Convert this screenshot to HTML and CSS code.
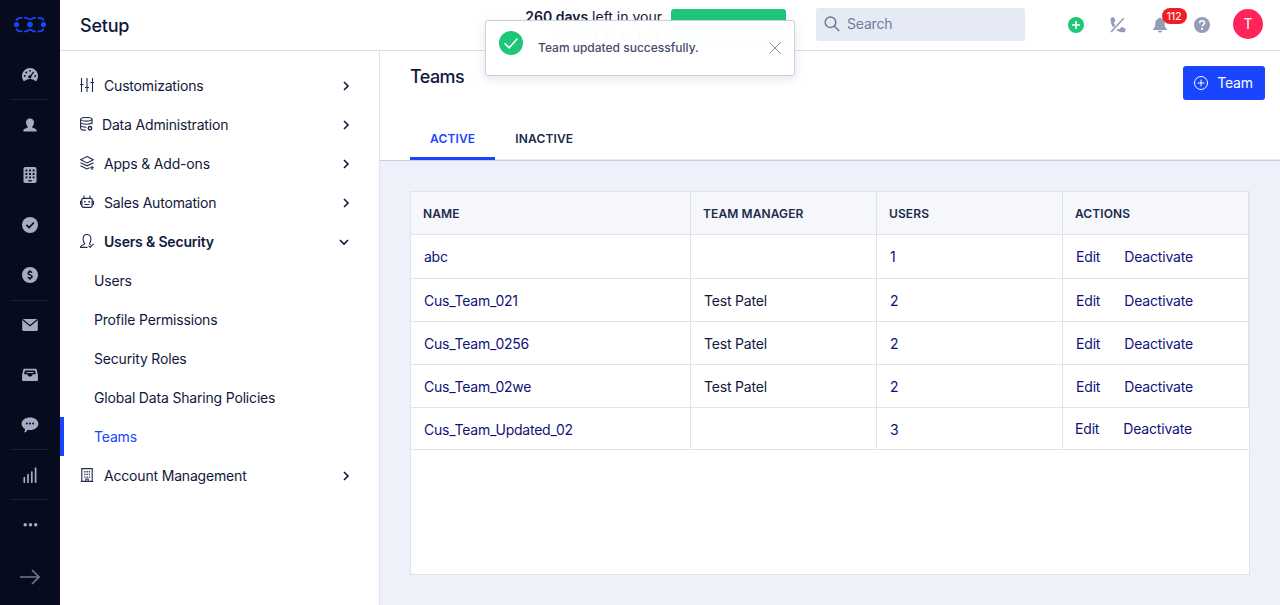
FILE: index.html
```html
<!DOCTYPE html>
<html lang="en">
<head>
<meta charset="utf-8">
<title>Setup - Teams</title>
<link rel="stylesheet" href="styles.css">
</head>
<body>
<div class="app">
  <nav class="rail">
    <div class="rail-logo">
      <svg width="34" height="18" viewBox="0 0 34 18" fill="none" stroke="#1a45ff" stroke-width="1.7">
        <path d="M3.200 4.600C4.200 2.600 5.400 1.900 7.600 1.900h1.800M11.200 1.900h1.600c2 0 2.300 1.500 4.200 1.500s2.200-1.500 4.200-1.500h1.600M24.600 1.900h1.800c2.200 0 3.400.700 4.400 2.700M3.200 12.600c1 2 2.200 2.700 4.400 2.700h1.800M11.200 15.300h1.600c2 0 2.300-1.500 4.200-1.500s2.200 1.500 4.200 1.500h1.600M24.600 15.300h1.800c2.200 0 3.400-.700 4.400-2.700"/>
        <g fill="#1a45ff" stroke="none"><circle cx="3.500" cy="8.600" r="2.600"/><circle cx="17" cy="8.600" r="2.800"/><circle cx="30.500" cy="8.600" r="2.600"/></g>
      </svg>
    </div>
    <a class="rail-item rail-line">
      <svg width="16" height="16" viewBox="0 0 16 16"><path fill="#a4adc6" d="M8 1a8 8 0 0 0-8 8c0 2 .7 4 2 5.200l2.600-1.500c2-1 4.800-1 6.800 0L14 14.200c1.300-1.200 2-3.200 2-5.200a8 8 0 0 0-8-8z"/><g fill="#060c1d"><circle cx="2.800" cy="9" r=".9"/><circle cx="4.300" cy="5.500" r=".9"/><circle cx="8" cy="3.800" r=".9"/><circle cx="13.200" cy="9" r=".9"/><circle cx="7.800" cy="9.800" r="1.600"/></g><path d="M8 9.800l3.700-5" stroke="#060c1d" stroke-width="1.200"/></svg>
    </a>
    <a class="rail-item">
      <svg width="16" height="16" viewBox="0 0 16 16" fill="#a4adc6"><path d="M8 1.400c2.600 0 4 1.700 4 4 0 1.800-.8 3.400-2 4.300.2 1.600 4.700 1.400 4.700 4.200 0 .5-.3.700-.7.700H2c-.4 0-.7-.2-.7-.7 0-2.800 4.500-2.600 4.700-4.200-1.200-.9-2-2.500-2-4.300 0-2.300 1.400-4 4-4z"/></svg>
    </a>
    <a class="rail-item">
      <svg width="16" height="16" viewBox="0 0 16 16"><rect x="1.500" y="0" width="13" height="16" rx="1.800" fill="#a4adc6"/><path d="M3.500 3.500h9M3.500 7h9M3.500 10.400h9" stroke="#060c1d" stroke-width="1.800" stroke-dasharray="1.800 1.800"/><path d="M6.200 13.800h3.600" stroke="#060c1d" stroke-width="1.300"/></svg>
    </a>
    <a class="rail-item">
      <svg width="16" height="16" viewBox="0 0 16 16"><circle cx="8" cy="8" r="8" fill="#a4adc6"/><path d="M4.300 7.800l2.800 2.700 4.800-5" stroke="#060c1d" stroke-width="1.700" fill="none"/></svg>
    </a>
    <a class="rail-item rail-line rail-tall">
      <svg width="16" height="16" viewBox="0 0 16 16"><circle cx="8" cy="8" r="8" fill="#a4adc6"/><path d="M10 5.700c-.4-.7-1-.9-2-.9-1.200 0-1.900.5-1.900 1.400 0 2.100 3.900 1.200 3.900 3.400 0 1-.8 1.500-2 1.500-1.100 0-1.800-.4-2.100-1.100M8 3.200v1.600M8 11v1.700" stroke="#060c1d" stroke-width="1.500" fill="none"/></svg>
    </a>
    <a class="rail-item rail-short">
      <svg width="16" height="16" viewBox="0 0 16 16"><rect x=".2" y="2" width="15.600" height="12" rx="1.500" fill="#a4adc6"/><path d="M.8 2.800L8 8.700l7.200-5.900" stroke="#060c1d" stroke-width="1.200" fill="none"/></svg>
    </a>
    <a class="rail-item">
      <svg width="16" height="16" viewBox="0 0 16 16"><path d="M2.500 1.800h11c.8 0 1.100.4 1.300 1.100l1.100 5v5c0 .8-.4 1.200-1.200 1.200H1.300c-.8 0-1.200-.4-1.200-1.200v-5l1.100-5c.2-.7.500-1.100 1.300-1.100z" fill="#a4adc6"/><path d="M3 3.500h10l.9 3.700h-3.200c-.4 1.600-1.300 2.300-2.700 2.300S5.700 8.800 5.300 7.200H2.100z" fill="#060c1d"/><path d="M4.500 5.600h7" stroke="#a4adc6"/></svg>
    </a>
    <a class="rail-item rail-line">
      <svg width="18" height="16" viewBox="0 0 18 16"><path d="M9 .4c4.800 0 8.400 2.700 8.400 6.300S13.800 13 9 13c-.8 0-1.500-.1-2.200-.2C5.700 14.700 4.300 15.300 2.700 15.500c.9-1 1.400-2 1.300-3.600C1.900 10.800.6 8.900.6 6.700.6 3.100 4.200.4 9 .4z" fill="#a4adc6"/><g fill="#060c1d"><circle cx="5.900" cy="6.600" r="1"/><circle cx="9" cy="6.600" r="1"/><circle cx="12.100" cy="6.600" r="1"/></g></svg>
    </a>
    <a class="rail-item rail-line">
      <svg width="16" height="16" viewBox="0 0 16 16" stroke="#a4adc6" stroke-width="1.700" stroke-linecap="round"><path d="M2.300 10.500v4.700M6 7.500v7.700M9.800 5v10.200M13.600 1v14.200"/></svg>
    </a>
    <a class="rail-item">
      <svg width="16" height="16" viewBox="0 0 16 16" fill="#a4adc6"><circle cx="3.200" cy="7.800" r="1.700"/><circle cx="8.500" cy="7.800" r="1.700"/><circle cx="13.700" cy="7.800" r="1.700"/></svg>
    </a>
    <a class="rail-item rail-expand">
      <svg width="20" height="16" viewBox="0 0 20 16" fill="none" stroke="#6f7896" stroke-width="1.700"><path d="M0 8h19M12 1l7 7-7 7"/></svg>
    </a>
  </nav>
  <div class="page">
    <header class="topbar">
      <h1 class="topbar-title">Setup</h1>
      <div class="trial"><b>260 days</b> left in your<br>BOOST plan trial</div>
      <div class="trial-button"></div>
      <div class="search">
        <svg width="16" height="16" viewBox="0 0 16 16" fill="none" stroke="#6f7896" stroke-width="1.500"><circle cx="6.500" cy="6.300" r="5.300"/><path d="M10.200 10l5 5"/></svg>
        <span>Search</span>
      </div>
      <div class="tools">
        <svg width="16" height="16" viewBox="0 0 16 16"><circle cx="8" cy="8" r="8" fill="#1fc677"/><path d="M8 4v8M4 8h8" stroke="#fff" stroke-width="1.600"/></svg>
        <svg width="16" height="16" viewBox="0 0 16 16" fill="#949db8"><path d="M1.200.8l2-.6c.6-.1 1 .1 1.200.7l.9 2.300c.2.500 0 .9-.3 1.200L3.800 5.500l1.400 2.700-2.200 2.200C1 7.500.4 4.500.7 1.600c0-.4.200-.7.500-.8zM7.500 12l2.200 0 1.300-1.600c.3-.4.700-.5 1.200-.3l2.800 1.300c.5.200.7.600.6 1.200l-.4 1.700c-.2.600-.5.900-1.100.9-3 .1-5.600-.6-8-2.300z"/><path d="M13.800 1.200L1 15" stroke="#949db8" stroke-width="1.600"/></svg>
        <div class="bell">
          <svg width="16" height="16" viewBox="0 0 16 16" fill="#949db8"><path d="M8 .4c.8 0 1.100.5 1.200 1.100 2.300.6 3.500 2.300 3.500 4.700 0 3.400.8 4.600 2.100 5.700.5.500.2 1.200-.5 1.200H1.700c-.7 0-1-.7-.5-1.200 1.300-1.100 2.100-2.300 2.100-5.700 0-2.400 1.200-4.100 3.500-4.700C6.900.9 7.200.4 8 .4zM5.700 13.800h4.600c-.2 1.100-1.100 1.800-2.300 1.800s-2.100-.7-2.300-1.800z"/></svg>
          <span class="badge">112</span>
        </div>
        <svg width="16" height="16" viewBox="0 0 16 16"><circle cx="8" cy="8" r="8" fill="#949db8"/><path d="M5.600 6.200c0-1.500 1-2.400 2.500-2.400s2.400.9 2.400 2.100c0 1.700-2.300 1.700-2.300 3.700" stroke="#fff" stroke-width="1.600" fill="none"/><circle cx="8.100" cy="11.900" r="1.100" fill="#fff"/></svg>
      </div>
      <div class="avatar">T</div>
      <div class="toast">
        <svg class="toast-ok" width="24" height="24" viewBox="0 0 24 24"><circle cx="12" cy="12" r="12" fill="#1fc677"/><path d="M5.500 12.200l4.600 4.600L18.500 7.500" stroke="#fff" stroke-width="1.500" fill="none"/></svg>
        <span class="toast-text">Team updated successfully.</span>
        <svg class="toast-close" width="12" height="12" viewBox="0 0 12 12" stroke="#858eaa" stroke-width="1"><path d="M.5.500l11 11M11.500.500l-11 11"/></svg>
      </div>
    </header>
    <div class="columns">
      <aside class="menu">
        <a class="menu-row">
          <svg width="14" height="14" viewBox="0 0 14 14" class="ico"><path d="M1.500 0v14M7 0v14M12.500 0v14M0 6.500h3.600M5 9.500h4M10.400 4.500H14"/></svg>
          <span>Customizations</span><svg class="chev" width="10" height="10" viewBox="0 0 10 10"><path d="M3 1l4 4-4 4"/></svg>
        </a>
        <a class="menu-row">
          <svg width="13" height="14" viewBox="0 0 13 14" class="ico tight"><ellipse cx="6.300" cy="2.300" rx="5.700" ry="1.800"/><path d="M.6 2.300v9c0 1 2.200 2 5.400 2M12 2.300v5M.6 5.300c0 1 2.500 1.900 5.700 1.900s5.700-.9 5.700-1.900M.6 8.300c0 1 2.500 1.900 5.900 1.900"/><circle cx="10" cy="11.200" r="1.700" stroke-width="1.500"/></svg>
          <span>Data Administration</span><svg class="chev" width="10" height="10" viewBox="0 0 10 10"><path d="M3 1l4 4-4 4"/></svg>
        </a>
        <a class="menu-row">
          <svg width="14" height="14" viewBox="0 0 14 14" class="ico"><path d="M7 .600l6.300 3.100L7 6.900.7 3.700zM.5 6.700L7 9.800l6.500-3.100M.5 9.700L7 12.900l2.500-1.200M12 9.700v4.300M9.900 11.800H14"/></svg>
          <span>Apps &amp; Add-ons</span><svg class="chev" width="10" height="10" viewBox="0 0 10 10"><path d="M3 1l4 4-4 4"/></svg>
        </a>
        <a class="menu-row">
          <svg width="14" height="14" viewBox="0 0 14 14" class="ico"><rect x="1.800" y="3.300" width="10.400" height="9" rx="1.500" stroke-width="1.300"/><path d="M4 3V.6M10 3V.6M.5 5.700v4M13.500 5.700v4M4.500 9.500h5"/><path d="M4 6.800h1.600M8.400 6.800H10" stroke-width="1.600"/></svg>
          <span>Sales Automation</span><svg class="chev" width="10" height="10" viewBox="0 0 10 10"><path d="M3 1l4 4-4 4"/></svg>
        </a>
        <a class="menu-row open">
          <svg width="14" height="14" viewBox="0 0 14 14" class="ico"><path d="M7.500 13.400H.5c0-3 3.700-2 4.200-3.800C3.600 8.500 3.100 7 3.100 5c0-2.700 1.300-4.500 3.900-4.500s3.900 1.800 3.900 4.500c0 2-.4 3.200-1.400 4.500.1.800.6 1.200 1.400 1.400M8.500 11.700l1.700 1.700 3.500-3.600"/></svg>
          <span>Users &amp; Security</span><svg class="chev down" width="10" height="10" viewBox="0 0 10 10"><path d="M1 3l4 4 4-4"/></svg>
        </a>
        <a class="menu-sub">Users</a>
        <a class="menu-sub">Profile Permissions</a>
        <a class="menu-sub">Security Roles</a>
        <a class="menu-sub">Global Data Sharing Policies</a>
        <a class="menu-sub current">Teams</a>
        <a class="menu-row">
          <svg width="14" height="14" viewBox="0 0 14 14" class="ico"><path d="M1.800 13.400V.6h10.400v12.800M.8 13.400h12.400M5.800 13v-2h2.400v2"/><path d="M4.200 3.700h5.900M4.200 6.400h5.900M4.200 9.100h5.900" stroke-width="1.400" stroke-dasharray="1.300 1"/></svg>
          <span>Account Management</span><svg class="chev" width="10" height="10" viewBox="0 0 10 10"><path d="M3 1l4 4-4 4"/></svg>
        </a>
      </aside>
      <main class="main">
        <div class="main-head">
          <div class="main-title">
            <h2>Teams</h2>
            <button class="add"><svg width="14" height="14" viewBox="0 0 14 14" fill="none" stroke="#fff"><circle cx="7" cy="7" r="6.500"/><path d="M7 3.700v6.600M3.700 7h6.600"/></svg><span>Team</span></button>
          </div>
          <div class="tabs"><a class="tab active">ACTIVE</a><a class="tab">INACTIVE</a></div>
        </div>
        <div class="body">
          <div class="grid">
            <div class="row head"><div>NAME</div><div>TEAM MANAGER</div><div>USERS</div><div>ACTIONS</div></div>
            <div class="row first"><div class="link">abc</div><div></div><div class="link">1</div><div class="link"><a>Edit</a><a>Deactivate</a></div></div>
            <div class="row"><div class="link">Cus_Team_021</div><div>Test Patel</div><div class="link">2</div><div class="link"><a>Edit</a><a>Deactivate</a></div></div>
            <div class="row"><div class="link">Cus_Team_0256</div><div>Test Patel</div><div class="link">2</div><div class="link"><a>Edit</a><a>Deactivate</a></div></div>
            <div class="row"><div class="link">Cus_Team_02we</div><div>Test Patel</div><div class="link">2</div><div class="link"><a>Edit</a><a>Deactivate</a></div></div>
            <div class="row last"><div class="link">Cus_Team_Updated_02</div><div></div><div class="link">3</div><div class="link"><a>Edit</a><a>Deactivate</a></div></div>
          </div>
        </div>
      </main>
    </div>
  </div>
</div>
</body>
</html>
```
FILE: styles.css
```css
* { box-sizing: border-box; }
body { margin: 0; font: 14px/20px Inter, "Liberation Sans", sans-serif; letter-spacing: -.18px; color: #12183c; background: #fff; }
h1, h2 { margin: 0; font-weight: 500; }
svg { display: block; flex: none; }
.app { display: flex; height: 605px; overflow: hidden; }

.rail { width: 60px; background: #060c1d; display: flex; flex-direction: column; align-items: center; flex: none; }
.rail-logo { height: 50px; display: flex; align-items: center; }
.rail-item { width: 38px; height: 50px; display: flex; align-items: center; justify-content: center; flex: none; border-bottom: 1px solid transparent; }
.rail-line { border-bottom-color: #1e2435; }
.rail-tall { height: 51px; }
.rail-short { height: 49px; }
.rail-expand { height: 55px; }

.page { flex: 1; display: flex; flex-direction: column; min-width: 0; }
.topbar { position: relative; height: 51px; flex: none; border-bottom: 1px solid #dae1ec; display: flex; align-items: flex-start; }
.topbar-title { font-size: 18px; line-height: 52px; letter-spacing: -.2px; padding-left: 20px; width: 400px; }
.trial { width: 202px; padding-top: 8px; text-align: right; font-size: 14px; line-height: 18px; letter-spacing: 0; white-space: nowrap; }
.trial b { font-weight: 600; }
.trial-button { width: 115px; height: 33px; margin: 9px 0 0 9px; border-radius: 3px; background: #1fc677; }
.search { width: 209px; height: 33px; margin: 8px 0 0 30px; padding: 0 8px 1px; display: flex; align-items: center; gap: 7px; border-radius: 3px; background: #e6eaf4; color: #737b99; }
.tools { display: flex; gap: 26px; margin: 17px 0 0 42.5px; }
.bell { position: relative; }
.badge { position: absolute; left: 10px; top: -9px; width: 25px; height: 16px; border-radius: 8px; background: #f01c28; color: #fff; font-size: 11px; line-height: 16px; text-align: center; }
.avatar { width: 30px; height: 30px; margin: 9px 0 0 23.5px; border-radius: 50%; background: #ff2459; color: #fff; line-height: 30px; text-align: center; }
.toast { position: absolute; z-index: 2; left: 425px; top: 20px; width: 310px; height: 56px; padding: 0 13px; display: flex; align-items: center; border: 1px solid #c7d3e0; border-radius: 3px; background: rgba(255,255,255,.985); box-shadow: 0 3px 10px rgba(20,35,70,.12); }
.toast-ok { margin: -10px 15px 0 0; }
.toast-text { flex: 1; font-size: 12px; line-height: 14px; letter-spacing: 0; font-weight: 500; color: #444d6b; }
.toast-close { margin-top: -1px; }

.columns { flex: 1; display: flex; min-height: 0; }
.menu { width: 320px; flex: none; padding-top: 15px; border-right: 1px solid #dfe1ef; }
.menu-row { height: 39px; padding: 0 28px 0 20px; display: flex; align-items: center; gap: 10px; }
.menu-row .ico { margin-top: -2px; }
.menu-row .tight { margin-right: -1px; }
.ico { fill: none; stroke: #222b50; stroke-width: 1.1; }
.menu-row span { flex: 1; }
.open { font-weight: 600; }
.chev { fill: none; stroke: #12183c; stroke-width: 1.6; }
.down { margin-right: 2px; }
.menu-sub { display: block; height: 39px; line-height: 39px; padding-left: 34px; }
.current { color: #1a45ff; border-left: 4px solid #1a45ff; padding-left: 30px; }

.main { flex: 1; display: flex; flex-direction: column; background: #eef1fa; }
.main-head { height: 110px; padding-left: 30px; display: flex; flex-direction: column; justify-content: space-between; background: #fff; border-bottom: 1px solid #c8cde2; }
.main-title { display: flex; justify-content: space-between; padding: 15px 15px 0 0; }
.main-title h2 { font-size: 18px; line-height: 22px; letter-spacing: -.6px; }
.add { width: 82px; height: 34px; display: flex; align-items: center; justify-content: center; gap: 9px; padding: 0 1px 0 0; border: 0; border-radius: 3px; background: #1a45ff; color: #fff; font: inherit; letter-spacing: inherit; }
.tabs { display: flex; height: 43px; border-bottom: 1px solid #e9ebf5; }
.tab { height: 43px; line-height: 43px; padding: 0 20px; font-size: 12px; font-weight: 600; letter-spacing: .15px; color: #202a4c; }
.active { color: #1a45ff; border-bottom: 3px solid #1a45ff; }
.body { padding: 30px; }
.grid { height: 384px; border: 1px solid #dfe2ef; background: #fff; }
.row { display: grid; grid-template-columns: 280px 186px 186px 186px; height: 43px; border-bottom: 1px solid #dfe2ef; }
.row > div { padding: 1px 13px 0; display: flex; align-items: center; gap: 24px; border-right: 1px solid #dfe2ef; }
.row > div:first-child { letter-spacing: -.24px; }
.row.head { background: #f5f7fb; font-size: 12px; font-weight: 600; letter-spacing: .1px; color: #202a4c; }
.row.head > div { padding: 2px 12px 0; letter-spacing: .1px; }
.row.first { height: 44px; }
.row .link { color: #10127a; }
.row.last { height: 42px; }
.row.last > div { padding-top: 3px; }
.row.last > div:last-child { border-right: 0; padding: 0 12px; }
```
